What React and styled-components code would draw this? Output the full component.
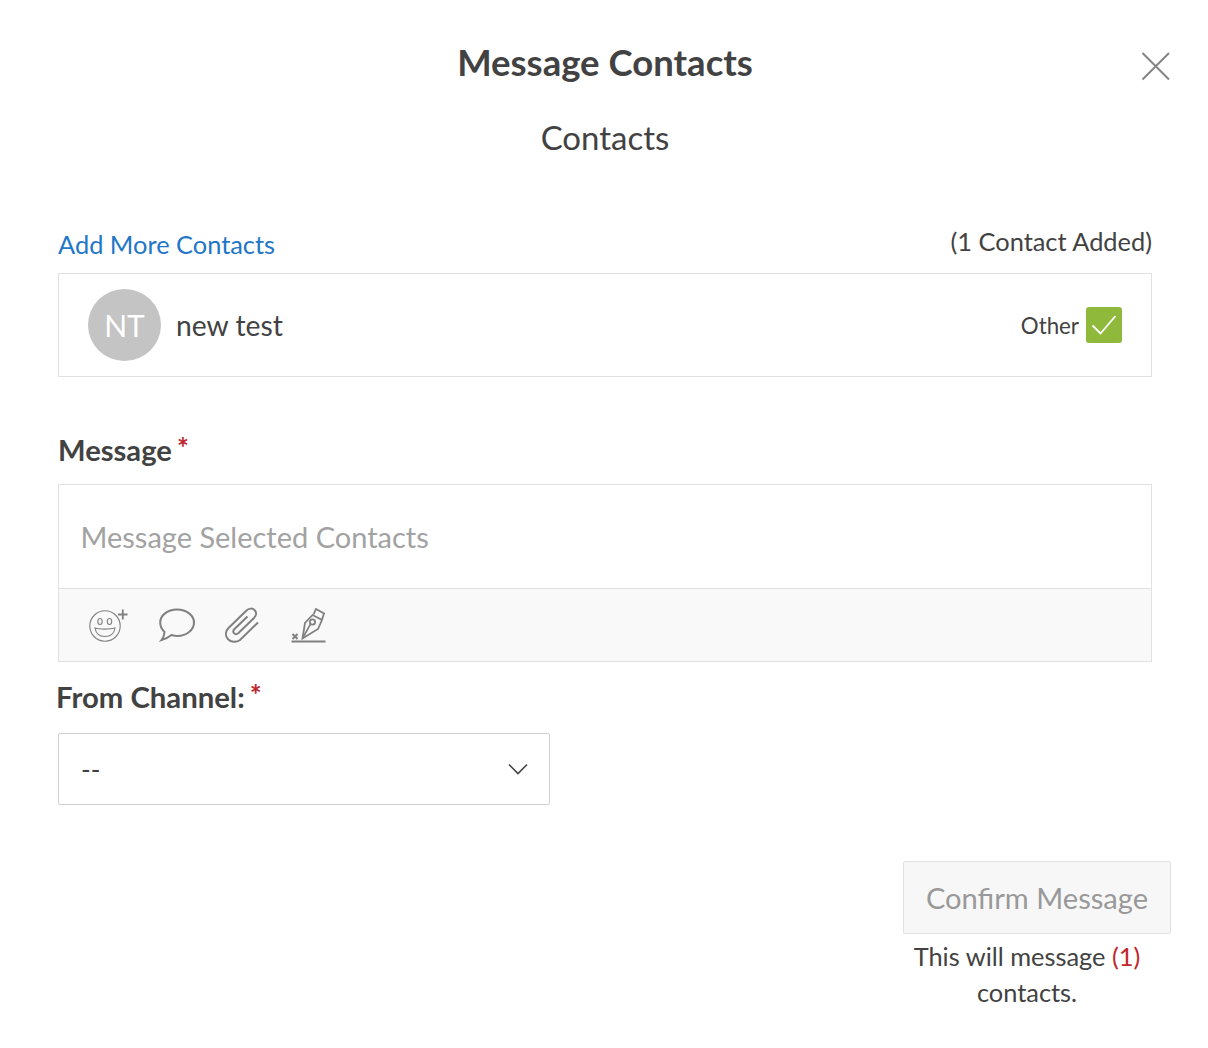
import styled, { createGlobalStyle } from "styled-components";

const GlobalStyle = createGlobalStyle`
  html, body {
    margin: 0;
    background: #fff;
  }
  body {
    font-family: Lato, "Open Sans", sans-serif;
    color: #424242;
  }
`;

export default function App() {
  return (
    <Modal>
      <GlobalStyle />
      <CloseButton aria-label="Close">
        <svg width="30" height="30" viewBox="0 0 30 30" fill="none" stroke="#858585" strokeWidth="2">
          <path d="M1.5 2 L28 28.5 M28 2 L1.5 28.5" />
        </svg>
      </CloseButton>
      <Title>Message Contacts</Title>
      <Subtitle>Contacts</Subtitle>

      <ContactsHeader>
        <AddLink href="#">Add More Contacts</AddLink>
        <AddedCount>(1 Contact Added)</AddedCount>
      </ContactsHeader>
      <ContactRow>
        <Avatar>NT</Avatar>
        <ContactName>new test</ContactName>
        <ContactType>Other</ContactType>
        <CheckBox>
          <svg width="26" height="22" viewBox="0 0 26 22" fill="none" stroke="#fff" strokeWidth="1.8">
            <path d="M1.5 11.5 L9.5 19.5 L24.5 2" />
          </svg>
        </CheckBox>
      </ContactRow>

      <MessageLabel>
        Message<Required>*</Required>
      </MessageLabel>
      <MessageBox>
        <MessageInput>Message Selected Contacts</MessageInput>
        <Toolbar>
          <ToolIcon>
            <svg width="40" height="34" viewBox="0 0 40 34" fill="none" stroke="#808080">
              <circle cx="16" cy="18" r="15.2" strokeWidth="1.1" />
              <ellipse cx="11" cy="13.5" rx="2.2" ry="3" strokeWidth="1.1" />
              <ellipse cx="20.5" cy="13.5" rx="2.2" ry="3" strokeWidth="1.1" />
              <path d="M6 20 C10 21.5 21 21.5 26 20 C25 26 20.5 28.5 16 28.5 C11.5 28.5 7 26 6 20 Z" strokeWidth="1.1" />
              <path d="M29 6.5 H38.5 M33.8 1.5 V11.5" strokeWidth="1.8" />
            </svg>
          </ToolIcon>
          <ToolIcon>
            <svg width="36" height="34" viewBox="0 0 36 34" fill="none" stroke="#808080" strokeWidth="2">
              <path d="M18 1.5 C27.5 1.5 35 7.5 35 14.5 C35 22 27.5 28 18.5 28 C16.5 28 14.5 27.6 12.5 27 C9.5 29.5 6 31 2.5 32 C4.5 29.5 5.5 27 5.5 24 C2.8 21.5 1.2 18 1.2 14.5 C1.2 7.5 8.5 1.5 18 1.5 Z" />
            </svg>
          </ToolIcon>
          <ToolIcon>
            <svg width="36" height="36" viewBox="0 0 36 36" fill="none" stroke="#808080" strokeWidth="2">
              <path d="M33 15.5 L15 33 C11 36 5.5 35 2.8 32 C0 28.5 0.5 24 3.5 21 L21 4 C24 1 27.5 1 29.5 3 C31.8 5.3 31.5 8.5 29 11 L13.5 26 C12 27.3 10 27.3 9 26.2 C8 25 8.2 23.3 9.5 22 L22.5 9.5" />
            </svg>
          </ToolIcon>
          <ToolIcon>
            <svg width="35" height="35" viewBox="0 0 35 35" fill="none" stroke="#808080">
              <path d="M0.5 33.5 H34.5" strokeWidth="1.8" />
              <path d="M1.5 26 L6.5 31 M6.5 26 L1.5 31" strokeWidth="2" />
              <path d="M11.5 30.5 L14 15 L21.5 7 L31 12 L27 21 Z" strokeWidth="1.8" />
              <path d="M22.5 6.5 L25 1 L33 5.5 L31 11.5" strokeWidth="1.8" />
              <circle cx="21.5" cy="14" r="2.6" strokeWidth="1.8" />
              <path d="M11.5 30.5 L19.5 16" strokeWidth="1.6" />
            </svg>
          </ToolIcon>
        </Toolbar>
      </MessageBox>

      <ChannelLabel>
        From Channel:<Required>*</Required>
      </ChannelLabel>
      <ChannelSelect>
        <span>--</span>
        <svg width="20" height="12" viewBox="0 0 20 12" fill="none" stroke="#444" strokeWidth="1.6">
          <path d="M1 1.5 L10 10.5 L19 1.5" />
        </svg>
      </ChannelSelect>

      <Footer>
        <ConfirmButton disabled>Confirm Message</ConfirmButton>
        <Hint>
          This will message <Count>(1)</Count>
          <br />
          contacts.
        </Hint>
      </Footer>
    </Modal>
  );
}

const Modal = styled.div`
  position: relative;
  width: 1208px;
  height: 1048px;
  box-sizing: border-box;
  padding: 40px 56px 0 58px;
  overflow: hidden;
`;

const CloseButton = styled.button`
  position: absolute;
  top: 51px;
  left: 1141px;
  width: 30px;
  height: 30px;
  padding: 0;
  border: 0;
  background: none;
  display: block;

  & svg {
    display: block;
  }
`;

const Title = styled.h1`
  margin: 0;
  font-size: 36.5px;
  line-height: 44px;
  font-weight: 700;
  text-align: center;
`;

const Subtitle = styled.h2`
  margin: 33px 0 0;
  font-size: 33px;
  line-height: 40px;
  font-weight: 400;
  text-align: center;
`;

const ContactsHeader = styled.div`
  margin-top: 69px;
  height: 47px;
  display: flex;
  justify-content: space-between;
  align-items: flex-start;
`;

const AddLink = styled.a`
  font-size: 25.4px;
  line-height: 36px;
  color: #2176c7;
  text-decoration: none;
`;

const AddedCount = styled.span`
  font-size: 25.4px;
  line-height: 30px;
`;

const ContactRow = styled.div`
  height: 104px;
  box-sizing: border-box;
  border: 1px solid #e1e1e1;
  padding: 0 29px;
  display: flex;
  align-items: center;
`;

const Avatar = styled.div`
  width: 73px;
  height: 72px;
  border-radius: 50%;
  background: #c4c4c4;
  color: #fff;
  font-size: 30px;
  display: flex;
  align-items: center;
  justify-content: center;
`;

const ContactName = styled.div`
  margin-left: 15px;
  font-size: 28.3px;
  flex: 1;
`;

const ContactType = styled.div`
  font-size: 22.3px;
`;

const CheckBox = styled.div`
  margin-left: 7px;
  width: 36px;
  height: 36px;
  border-radius: 3px;
  background: #8fb93b;
  display: flex;
  align-items: center;
  justify-content: center;
`;

const MessageLabel = styled.div`
  margin-top: 53px;
  font-size: 29.2px;
  line-height: 40px;
  font-weight: 700;
  height: 54px;
`;

const Required = styled.span`
  margin-left: 5px;
  color: #c0272d;
  font-weight: 700;
  font-size: 28px;
  line-height: 1;
  vertical-align: 3px;
`;

const MessageBox = styled.div`
  border: 1px solid #e1e1e1;
`;

const MessageInput = styled.div`
  height: 103px;
  box-sizing: border-box;
  padding: 0 21.5px;
  display: flex;
  align-items: center;
  font-size: 29px;
  color: #a2a2a2;
`;

const Toolbar = styled.div`
  height: 73px;
  box-sizing: border-box;
  border-top: 1px solid #e1e1e1;
  background: #f9f9f9;
  padding: 0 0 0 30px;
  display: flex;
  align-items: center;
  gap: 30px;
`;

const ToolIcon = styled.div`
  display: flex;

  & svg {
    display: block;
  }
`;

const ChannelLabel = styled.div`
  margin: 15px 0 0 -2px;
  height: 56px;
  font-size: 29.3px;
  line-height: 40px;
  font-weight: 700;
`;

const ChannelSelect = styled.div`
  width: 492px;
  height: 72px;
  box-sizing: border-box;
  border: 1px solid #cfcfcf;
  border-radius: 2px;
  padding: 0 21px 0 22px;
  font-size: 26px;
  display: flex;
  align-items: center;
  justify-content: space-between;
`;

const Footer = styled.div`
  margin-top: 56px;
  display: flex;
  flex-direction: column;
  align-items: flex-end;
`;

const ConfirmButton = styled.button`
  width: 268px;
  height: 73px;
  margin-right: -19px;
  box-sizing: border-box;
  border: 1px solid #e1e1e1;
  border-radius: 2px;
  background: #f7f7f7;
  color: #999;
  font-family: inherit;
  font-size: 29.1px;
`;

const Hint = styled.div`
  margin-top: 4px;
  margin-right: 5px;
  width: 240px;
  text-align: center;
  font-size: 25.4px;
  line-height: 36px;
`;

const Count = styled.span`
  color: #c0272d;
`;
